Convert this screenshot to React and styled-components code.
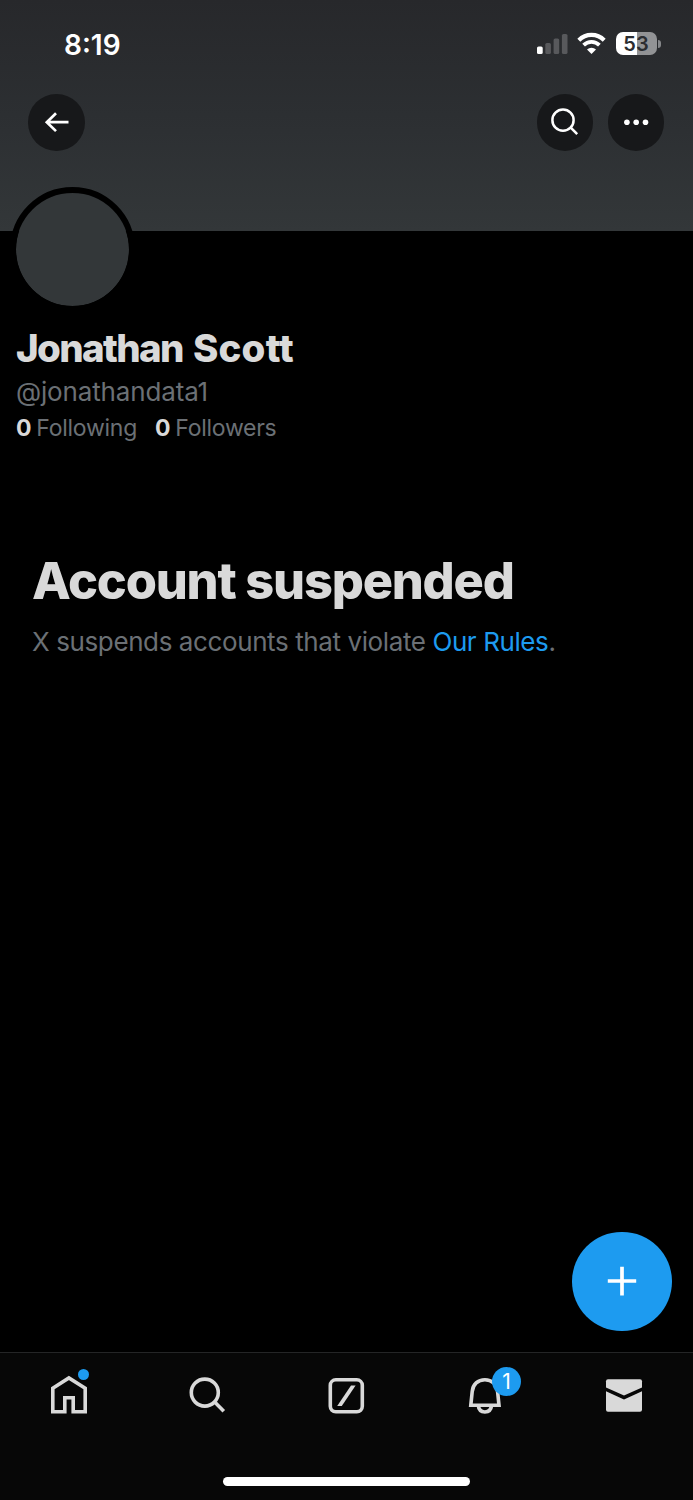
import React from "react";
import styled, { createGlobalStyle } from "styled-components";

const GlobalStyle = createGlobalStyle`
  * { box-sizing: border-box; }
  body { margin: 0; background: #000; font-family: Inter, "Liberation Sans", sans-serif; }
  svg { display: block; overflow: visible; }
`;

const Screen = styled.div`
  width: 693px;
  height: 1500px;
  display: flex;
  flex-direction: column;
  overflow: hidden;
  background: #000;
`;

const Banner = styled.header`
  height: 231px;
  flex: none;
  background: linear-gradient(#27282b, #2c2f32 50%, #333739);
`;

const StatusBar = styled.div`
  height: 94.2px;
  display: flex;
  justify-content: space-between;
  padding: 27px 32.5px 0 64px;
`;

const Clock = styled.time`
  color: #fff;
  font-size: 28px;
  line-height: 36px;
  font-weight: 600;
`;

const StatusIcons = styled.div`
  display: flex;
  align-items: flex-start;
  gap: 9.7px;
  padding-top: 5px;
`;

const Battery = styled.div`
  display: flex;
  align-items: center;
  gap: 1px;
`;

const BatteryBody = styled.div`
  width: 41px;
  height: 23px;
  border-radius: 7px;
  background: linear-gradient(90deg, #fff 21px, #929395 21px);
  color: #2b2d30;
  font-size: 20px;
  line-height: 24px;
  font-weight: 600;
  text-align: center;
`;

const BatteryTip = styled.div`
  width: 3px;
  height: 8px;
  border-radius: 0 4px 4px 0;
  background: #85878a;
`;

const Toolbar = styled.div`
  display: flex;
  gap: 14.5px;
  padding: 0 28.7px 0 28.4px;
`;

const RoundButton = styled.button`
  width: 56.5px;
  height: 56.5px;
  padding: 0;
  border: 0;
  border-radius: 50%;
  display: grid;
  place-items: center;
  background: #17181a;
  margin-right: ${(p) => (p.$leading ? "auto" : 0)};
`;

const Profile = styled.section`
  padding: 0 16px;
`;

const Avatar = styled.div`
  width: 125px;
  height: 125px;
  margin: -44px 0 0 -6.5px;
  border: 6.5px solid #000;
  border-radius: 50%;
  background: #333739;
  background-clip: padding-box;
`;

const Name = styled.h1`
  display: flex;
  gap: 10px;
  margin: 12px 0 0;
  color: #d9d9d9;
  font-size: 38.5px;
  line-height: 48px;
  font-weight: 800;
  white-space: nowrap;
`;

const NameWord = styled.span`
  letter-spacing: ${(p) => p.$tracking};
`;

const Handle = styled.div`
  margin-top: 4px;
  color: #6b7075;
  font-size: 26px;
  line-height: 32px;
  letter-spacing: -0.15px;
`;

const Stats = styled.div`
  display: flex;
  gap: 18px;
  margin-top: 6px;
`;

const Stat = styled.div`
  display: flex;
  gap: 5px;
  color: #6b7075;
  font-size: 23px;
  line-height: 29px;
  letter-spacing: -0.26px;
`;

const Count = styled.b`
  color: #d9d9d9;
  font-weight: 700;
`;

const Notice = styled.section`
  flex: 1;
  padding: 107px 32px 0;
`;

const NoticeTitle = styled.h2`
  margin: 0;
  color: #d9d9d9;
  font-size: 50.5px;
  line-height: 62px;
  font-weight: 800;
  letter-spacing: -1.22px;
  white-space: nowrap;
`;

const NoticeText = styled.p`
  margin: 14px 0 0;
  color: #6b7075;
  font-size: 26px;
  line-height: 32px;
  letter-spacing: -0.4px;
  white-space: nowrap;
`;

const RulesLink = styled.a`
  color: #1d9bf0;
`;

const ComposeRow = styled.div`
  display: flex;
  justify-content: flex-end;
  padding: 0 21.5px 21px;
`;

const ComposeButton = styled.button`
  width: 99.5px;
  height: 99.5px;
  padding: 0;
  border: 0;
  border-radius: 50%;
  display: grid;
  place-items: center;
  background: #1d9bf0;
`;

const BottomBar = styled.footer`
  height: 148px;
  flex: none;
  border-top: 1px solid #242526;
  background: #070707;
`;

const Tabs = styled.nav`
  height: 124px;
  display: grid;
  grid-template-columns: repeat(5, 1fr);
  justify-items: center;
  padding-top: 22px;
`;

const Tab = styled.div`
  position: relative;
  width: 40px;
  height: 40px;
`;

const Dot = styled.span`
  position: absolute;
  left: 28.8px;
  top: -6px;
  width: 11px;
  height: 11px;
  border-radius: 50%;
  background: #1d9bf0;
`;

const Badge = styled.span`
  position: absolute;
  left: 27px;
  top: -8px;
  width: 29px;
  height: 29px;
  border-radius: 50%;
  background: #1d9bf0;
  color: #fff;
  font-size: 21px;
  line-height: 29px;
  text-align: center;
`;

const HomeIndicator = styled.div`
  width: 247px;
  height: 9px;
  margin: 0 auto;
  border-radius: 5px;
  background: #fff;
`;

const SignalIcon = () => (
  <svg width="30.5" height="23" viewBox="0 0 30.5 23">
    <rect x="0" y="14.5" width="5.7" height="7.5" rx="1.6" fill="#fff" />
    <g fill="#58595c">
      <rect x="8.3" y="11" width="5.6" height="11" rx="1.6" />
      <rect x="16.6" y="6.5" width="5.6" height="15.5" rx="1.6" />
      <rect x="24.9" y="2" width="5.6" height="20" rx="1.6" />
    </g>
  </svg>
);

const WifiIcon = () => (
  <svg width="29" height="23" viewBox="0 0 29 23" fill="none" stroke="#fff">
    <path d="M1.800 8.200A17.8 17.8 0 0 1 27.200 8.200" strokeWidth="4.1" />
    <path d="M6.600 13.2A11.2 11.2 0 0 1 22.400 13.2" strokeWidth="3.8" />
    <path d="M14.5 22L10 17.500A6.4 6.4 0 0 1 19 17.500Z" fill="#fff" stroke="none" />
  </svg>
);

const BackIcon = () => (
  <svg width="56.5" height="56.5" viewBox="0 0 56.5 56.5" fill="none" stroke="#fff" strokeWidth="2.7">
    <path d="M28 19.3L18.8 28.2L28 37.1M18.8 28.2H40.5" />
  </svg>
);

const TopSearchIcon = () => (
  <svg width="56.5" height="56.5" viewBox="0 0 56.5 56.5" fill="none" stroke="#fff" strokeWidth="2.5">
    <circle cx="26" cy="26.2" r="10.6" />
    <path d="M33.5 33.4L40.2 40.2" />
  </svg>
);

const MoreIcon = () => (
  <svg width="56.5" height="56.5" viewBox="0 0 56.5 56.5" fill="#fff">
    <circle cx="18.9" cy="28.2" r="2.8" />
    <circle cx="28.2" cy="28.2" r="2.8" />
    <circle cx="37.5" cy="28.2" r="2.8" />
  </svg>
);

const PlusIcon = () => (
  <svg width="30" height="30" viewBox="0 0 30 30" fill="none" stroke="#fff" strokeWidth="3.7">
    <path d="M15 .8V29.4M.8 15H29.2" />
  </svg>
);

const TabIcon = ({ children }) => (
  <svg width="40" height="40" viewBox="0 0 40 40" fill="none" stroke="#d9d9d9" strokeWidth="3.6">
    {children}
  </svg>
);

export default function App() {
  return (
    <>
      <GlobalStyle />
      <Screen>
        <Banner>
          <StatusBar>
            <Clock>8:19</Clock>
            <StatusIcons>
              <SignalIcon />
              <WifiIcon />
              <Battery>
                <BatteryBody>53</BatteryBody>
                <BatteryTip />
              </Battery>
            </StatusIcons>
          </StatusBar>
          <Toolbar>
            <RoundButton $leading aria-label="Back"><BackIcon /></RoundButton>
            <RoundButton aria-label="Search"><TopSearchIcon /></RoundButton>
            <RoundButton aria-label="More"><MoreIcon /></RoundButton>
          </Toolbar>
        </Banner>
        <Profile>
          <Avatar />
          <Name>
            <NameWord $tracking="-1.65px">Jonathan</NameWord>
            <NameWord $tracking="0.2px">Scott</NameWord>
          </Name>
          <Handle>@jonathandata1</Handle>
          <Stats>
            <Stat><Count>0</Count>Following</Stat>
            <Stat><Count>0</Count>Followers</Stat>
          </Stats>
        </Profile>
        <Notice>
          <NoticeTitle>Account suspended</NoticeTitle>
          <NoticeText>
            X suspends accounts that violate <RulesLink>Our Rules</RulesLink>.
          </NoticeText>
        </Notice>
        <ComposeRow>
          <ComposeButton aria-label="Compose"><PlusIcon /></ComposeButton>
        </ComposeRow>
        <BottomBar>
          <Tabs>
            <Tab>
              <TabIcon>
                <path d="M3.8 36.8V13.2L19.9 3L36.200 13.2V36.8H24.2V22.8H15.8V36.8Z" />
              </TabIcon>
              <Dot />
            </Tab>
            <Tab>
              <TabIcon>
                <circle cx="16.8" cy="17.6" r="13.5" />
                <path d="M26.4 26.8L35.8 36.3" />
              </TabIcon>
            </Tab>
            <Tab>
              <TabIcon>
                <rect x="4.300" y="4.8" width="32" height="32" rx="5.5" />
                <path d="M11.200 31L25 10.4H29.600L15.800 31Z" fill="#d9d9d9" stroke="none" />
              </TabIcon>
            </Tab>
            <Tab>
              <TabIcon>
                <path d="M5.8 30.2L7.2 16.600C7.800 9.200 13 4.800 19.900 4.800S32 9.200 32.600 16.600L34 30.2Z" />
                <path d="M13.2 30.2C13.6 34.7 16.2 37 19.9 37S26.2 34.7 26.6 30.2" />
              </TabIcon>
              <Badge>1</Badge>
            </Tab>
            <Tab>
              <TabIcon>
                <g fill="#d9d9d9" stroke="none">
                  <path d="M2 12.4V6.2Q2 4.2 4 4.2H36Q38 4.2 38 6.2V12.4L20 20.6Z" />
                  <path d="M2 16.3L20 24.4L38 16.3V34.8Q38 36.8 36 36.8H4Q2 36.8 2 34.8Z" />
                </g>
              </TabIcon>
            </Tab>
          </Tabs>
          <HomeIndicator />
        </BottomBar>
      </Screen>
    </>
  );
}
